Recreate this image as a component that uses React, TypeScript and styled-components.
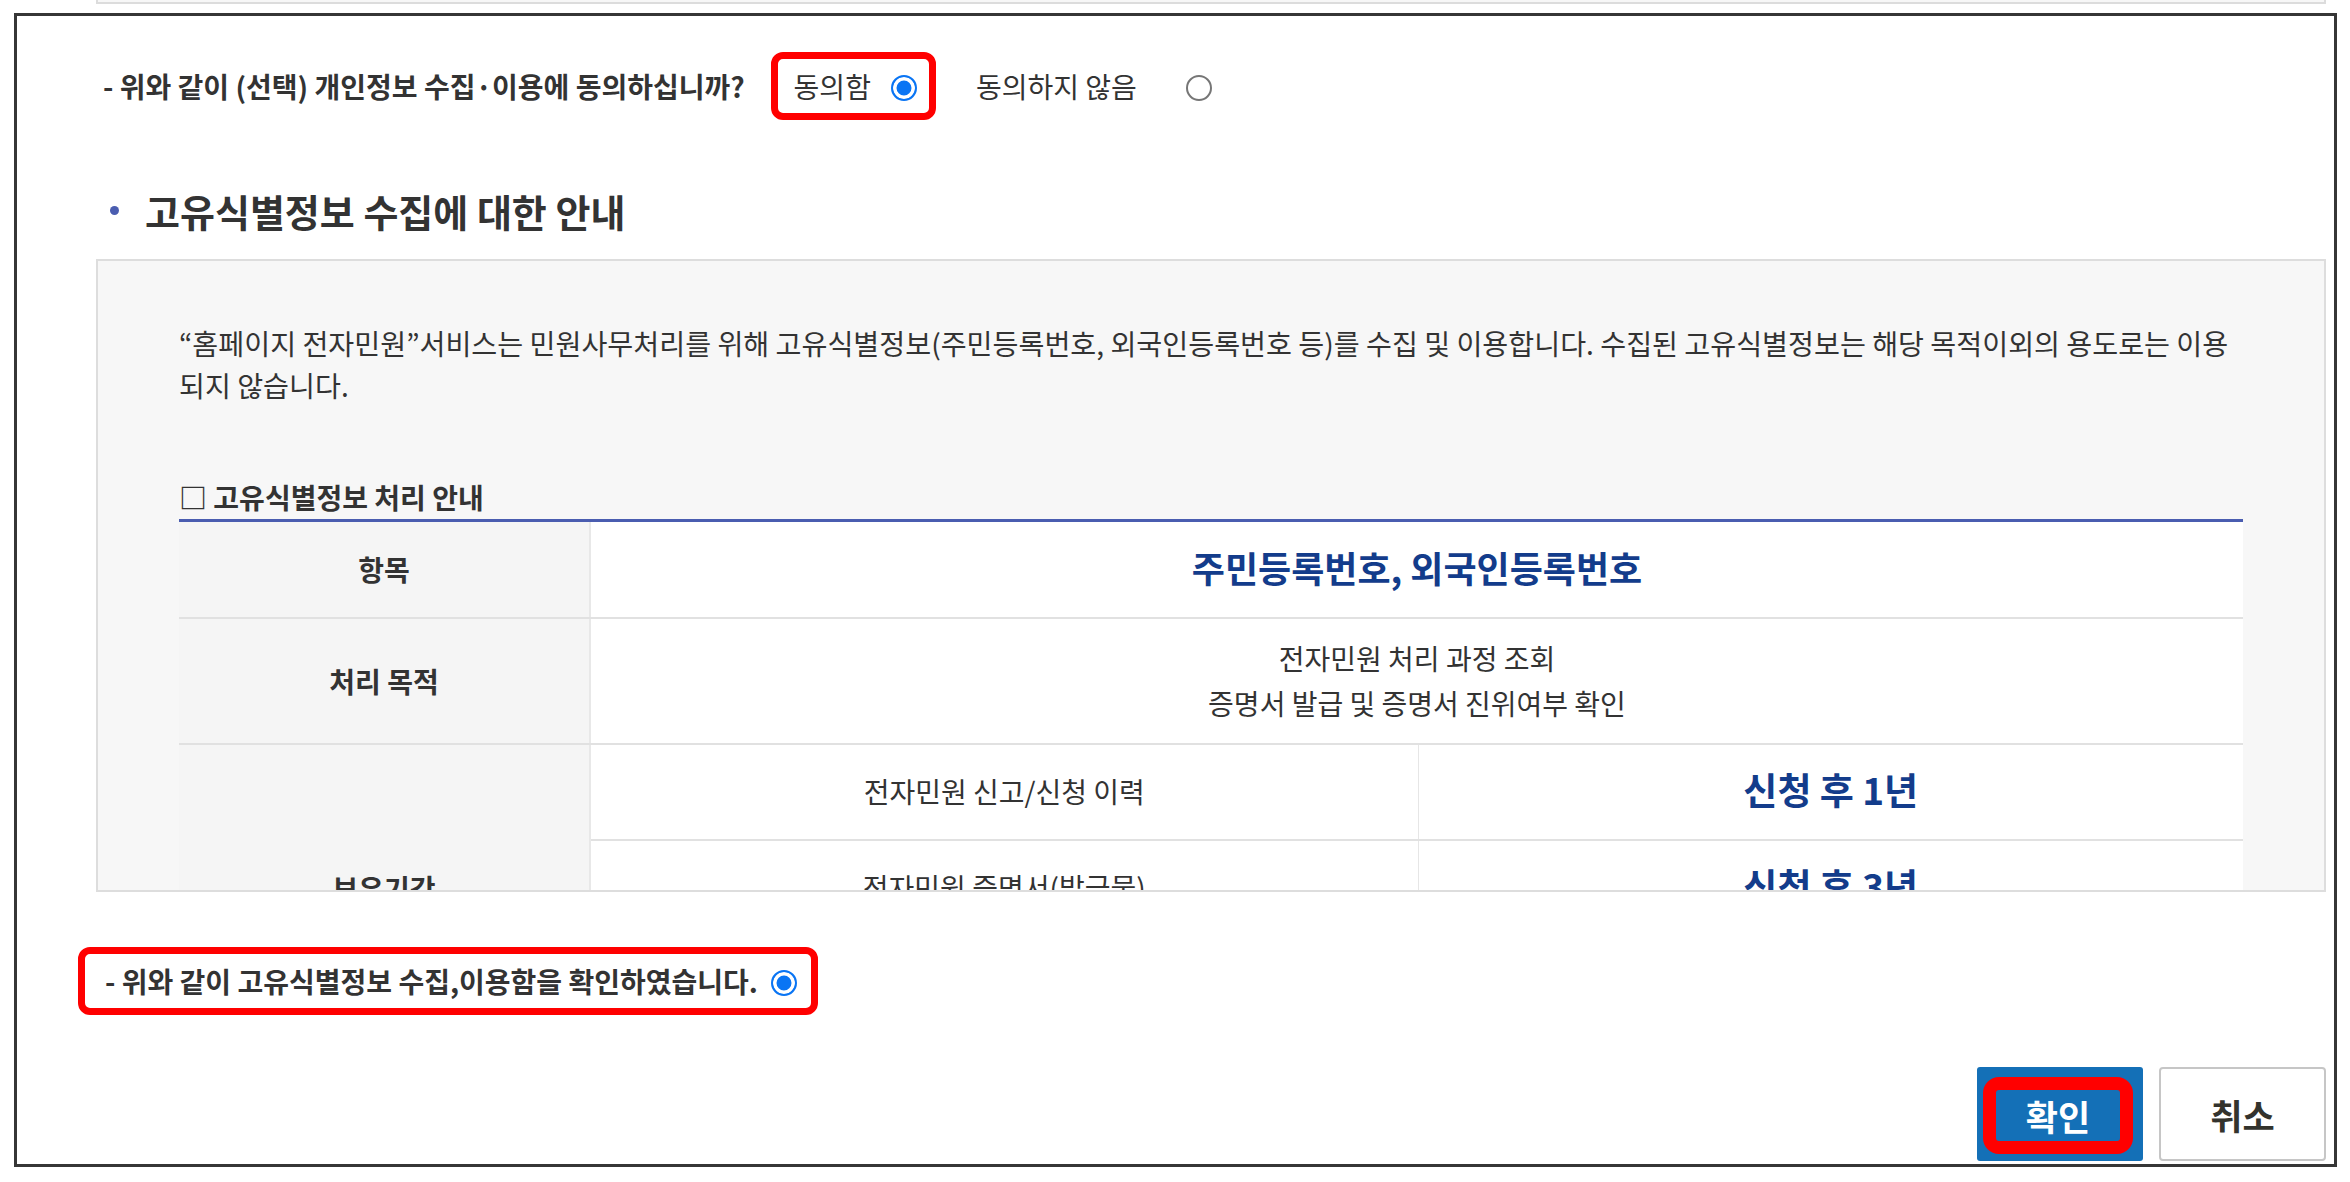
import styled, { createGlobalStyle } from 'styled-components';

const GlobalStyle = createGlobalStyle`
  html, body {
    margin: 0;
    padding: 0;
    background: #fff;
  }
  body {
    font-family: 'Noto Sans CJK KR', 'Noto Sans', sans-serif;
    color: #333;
  }
  * {
    box-sizing: border-box;
  }
`;

const Page = styled.div`
  width: 2350px;
  padding-left: 14px;
`;

const PrevBoxEdge = styled.div`
  margin-left: 82px;
  width: 2230px;
  height: 4px;
  background: #f7f7f7;
  border: 2px solid #dcdcdc;
  border-top: none;
`;

const Frame = styled.div`
  margin-top: 9px;
  width: 2323px;
  border: 3px solid #363636;
  padding: 36px 8px 3px 79px;
`;

const QuestionRow = styled.div`
  display: flex;
  align-items: center;
  height: 68px;
  padding-left: 7px;
`;

const Question = styled.span<{ $bold?: boolean }>`
  font-size: 28px;
  font-weight: ${({ $bold }) => ($bold ? 700 : 400)};
  color: #333;
  white-space: nowrap;
`;

const Marked = styled.div<{ $pad: string }>`
  display: flex;
  align-items: center;
  height: 68px;
  border: 7px solid #ff0000;
  border-radius: 12px;
  padding: ${({ $pad }) => $pad};
`;

const Option = styled.label<{ $gap: number; $offset?: number }>`
  display: flex;
  align-items: center;
  gap: ${({ $gap }) => $gap}px;
  margin-left: ${({ $offset }) => $offset ?? 0}px;
`;

const Radio = styled.span<{ $checked?: boolean }>`
  display: inline-block;
  width: 26px;
  height: 26px;
  border-radius: 50%;
  flex-shrink: 0;
  border: 2px solid ${({ $checked }) => ($checked ? '#0a75f4' : '#767676')};
  background: ${({ $checked }) => ($checked ? '#0a75f4' : '#fff')};
  box-shadow: ${({ $checked }) => ($checked ? 'inset 0 0 0 3.5px #fff' : 'none')};
  margin-top: 4px;
`;

const SectionTitle = styled.h3`
  margin: 66px 0 0;
  display: flex;
  align-items: center;
  padding-left: 14px;
  height: 49px;
  font-size: 38px;
  font-weight: 700;
  color: #333;

  &::before {
    content: '';
    width: 9px;
    height: 9px;
    border-radius: 50%;
    background: #4a5db0;
    margin-right: 26px;
  }
`;

const InfoBox = styled.div`
  margin-top: 24px;
  height: 633px;
  overflow: hidden;
  background: #f7f7f7;
  border: 2px solid #dddddd;
  padding: 61px 81px 0;
`;

const Paragraph = styled.p`
  margin: 0;
  font-size: 28.2px;
  line-height: 42px;
  color: #333;
`;

const SubTitle = styled.h4`
  margin: 69px 0 0;
  font-size: 28px;
  line-height: 44px;
  font-weight: 700;
  color: #333;
`;

const Table = styled.table`
  width: 100%;
  border-collapse: collapse;
  table-layout: fixed;
  border-top: 3px solid #4a5db0;
`;

const Th = styled.th<{ $h: number }>`
  height: ${({ $h }) => $h}px;
  padding: 0;
  background: #f5f5f5;
  border-bottom: 2px solid #e1e1e1;
  border-right: 2px solid #e8e8e8;
  font-size: 28px;
  font-weight: 700;
  color: #333;
  vertical-align: middle;
`;

const Td = styled.td<{ $h: number; $split?: boolean }>`
  height: ${({ $h }) => $h}px;
  padding: 0;
  background: #fff;
  border-bottom: 2px solid #e1e1e1;
  border-left: ${({ $split }) => ($split ? '1px solid #e6e6e6' : 'none')};
  text-align: center;
  vertical-align: middle;
  font-size: 28px;
  line-height: 45px;
  color: #333;
`;

const Highlight = styled.strong<{ $size: number }>`
  font-size: ${({ $size }) => $size}px;
  font-weight: 700;
  color: #133c8b;
`;

const ConfirmRow = styled.div`
  margin: 55px 0 0 -18px;
  display: flex;
`;

const ButtonRow = styled.div`
  margin-top: 52px;
  display: flex;
  justify-content: flex-end;
  gap: 16px;
`;

const ConfirmButton = styled.button`
  width: 166px;
  height: 94px;
  display: flex;
  padding: 10px 10px 7px 6px;
  border: none;
  border-radius: 3px;
  background: #1470b7;
  font-family: inherit;
`;

const ConfirmRing = styled.span`
  flex: 1;
  display: flex;
  align-items: center;
  justify-content: center;
  border: 13px solid #ff0000;
  border-radius: 16px;
  color: #fff;
  font-size: 35px;
  font-weight: 700;
`;

const CancelButton = styled.button`
  width: 167px;
  height: 94px;
  background: #fff;
  border: 2px solid #c6c6c6;
  border-radius: 4px;
  font-family: inherit;
  font-size: 35px;
  font-weight: 700;
  color: #33332d;
`;

const retention = [
  { item: '전자민원 신고/신청 이력', period: '신청 후 1년' },
  { item: '전자민원 증명서(발급물)', period: '신청 후 3년' },
  { item: '전자민원 처리 결과', period: '처리 후 5년' },
];

export default function App() {
  return (
    <Page>
      <GlobalStyle />
      <PrevBoxEdge />
      <Frame>
        <QuestionRow>
          <Question $bold>- 위와 같이 (선택) 개인정보 수집·이용에 동의하십니까?</Question>
          <Marked $pad="0 12px 0 16px" style={{ marginLeft: 26 }}>
            <Option $gap={20}>
              <Question>동의함</Question>
              <Radio $checked />
            </Option>
          </Marked>
          <Option $gap={49} $offset={40}>
            <Question>동의하지 않음</Question>
            <Radio />
          </Option>
        </QuestionRow>

        <SectionTitle>고유식별정보 수집에 대한 안내</SectionTitle>

        <InfoBox>
          <Paragraph>
            “홈페이지 전자민원”서비스는 민원사무처리를 위해 고유식별정보(주민등록번호, 외국인등록번호 등)를 수집 및 이용합니다. 수집된 고유식별정보는 해당 목적이외의 용도로는 이용
            <br />
            되지 않습니다.
          </Paragraph>
          <SubTitle>□ 고유식별정보 처리 안내</SubTitle>
          <Table>
            <colgroup>
              <col style={{ width: 411 }} />
              <col style={{ width: 828 }} />
              <col />
            </colgroup>
            <tbody>
              <tr>
                <Th $h={97}>항목</Th>
                <Td $h={97} colSpan={2}>
                  <Highlight $size={36}>주민등록번호, 외국인등록번호</Highlight>
                </Td>
              </tr>
              <tr>
                <Th $h={126}>처리 목적</Th>
                <Td $h={126} colSpan={2}>
                  전자민원 처리 과정 조회
                  <br />
                  증명서 발급 및 증명서 진위여부 확인
                </Td>
              </tr>
              {retention.map((row, i) => (
                <tr key={row.item}>
                  {i === 0 && (
                    <Th $h={96} rowSpan={retention.length}>
                      보유기간
                    </Th>
                  )}
                  <Td $h={96}>{row.item}</Td>
                  <Td $h={96} $split>
                    <Highlight $size={37}>{row.period}</Highlight>
                  </Td>
                </tr>
              ))}
            </tbody>
          </Table>
        </InfoBox>

        <ConfirmRow>
          <Marked $pad="0 14px 0 20px">
            <Option $gap={13}>
              <Question $bold>- 위와 같이 고유식별정보 수집,이용함을 확인하였습니다.</Question>
              <Radio $checked />
            </Option>
          </Marked>
        </ConfirmRow>

        <ButtonRow>
          <ConfirmButton>
            <ConfirmRing>확인</ConfirmRing>
          </ConfirmButton>
          <CancelButton>취소</CancelButton>
        </ButtonRow>
      </Frame>
    </Page>
  );
}
